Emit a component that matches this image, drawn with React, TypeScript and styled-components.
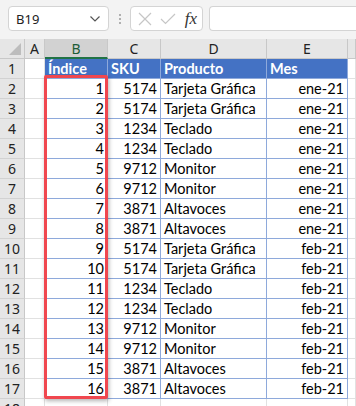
import { createGlobalStyle } from 'styled-components';
import styled from 'styled-components';

const GlobalStyle = createGlobalStyle`
  html, body {
    margin: 0;
    padding: 0;
    background: #ffffff;
  }
  body {
    font-family: Lato, 'Open Sans', sans-serif;
    width: 356px;
    height: 406px;
    overflow: hidden;
  }
`;

type Row = { idx: number; sku: number; product: string; month: string };

const rows: Row[] = [
  { idx: 1, sku: 5174, product: 'Tarjeta Gráfica', month: 'ene-21' },
  { idx: 2, sku: 5174, product: 'Tarjeta Gráfica', month: 'ene-21' },
  { idx: 3, sku: 1234, product: 'Teclado', month: 'ene-21' },
  { idx: 4, sku: 1234, product: 'Teclado', month: 'ene-21' },
  { idx: 5, sku: 9712, product: 'Monitor', month: 'ene-21' },
  { idx: 6, sku: 9712, product: 'Monitor', month: 'ene-21' },
  { idx: 7, sku: 3871, product: 'Altavoces', month: 'ene-21' },
  { idx: 8, sku: 3871, product: 'Altavoces', month: 'ene-21' },
  { idx: 9, sku: 5174, product: 'Tarjeta Gráfica', month: 'feb-21' },
  { idx: 10, sku: 5174, product: 'Tarjeta Gráfica', month: 'feb-21' },
  { idx: 11, sku: 1234, product: 'Teclado', month: 'feb-21' },
  { idx: 12, sku: 1234, product: 'Teclado', month: 'feb-21' },
  { idx: 13, sku: 9712, product: 'Monitor', month: 'feb-21' },
  { idx: 14, sku: 9712, product: 'Monitor', month: 'feb-21' },
  { idx: 15, sku: 3871, product: 'Altavoces', month: 'feb-21' },
  { idx: 16, sku: 3871, product: 'Altavoces', month: 'feb-21' },
];

const columns = ['A', 'B', 'C', 'D', 'E', ''];

const App = (): JSX.Element => {
  return (
    <>
      <GlobalStyle />
      <Window>
        <FormulaBar>
          <NameBox>
            <span>B19</span>
            <svg width="12" height="8" viewBox="0 0 12 8">
              <path d="M1.5 1.5 L6 6 L10.5 1.5" fill="none" stroke="#555" strokeWidth="1.2" />
            </svg>
          </NameBox>
          <Dots>
            <i />
            <i />
            <i />
          </Dots>
          <FxBox>
            <svg width="14" height="14" viewBox="0 0 14 14">
              <path d="M1 1 L13 13 M13 1 L1 13" stroke="#c6c6c6" strokeWidth="1.2" />
            </svg>
            <svg width="16" height="12" viewBox="0 0 16 12">
              <path d="M1 6 L5.5 10.5 L15 1" fill="none" stroke="#c6c6c6" strokeWidth="1.2" />
            </svg>
            <FxLabel>fx</FxLabel>
          </FxBox>
          <FormulaInput />
        </FormulaBar>

        <Sheet>
          <Grid>
            <Corner>
              <svg width="12" height="12" viewBox="0 0 12 12">
                <path d="M12 0 L12 12 L0 12 Z" fill="#bdbdbd" />
              </svg>
            </Corner>
            {columns.map((c) => (
              <ColHeader key={c || 'F'} $selected={c === 'B'}>
                {c}
              </ColHeader>
            ))}

            <RowHeader>1</RowHeader>
            <Cell />
            <TitleCell>Índice</TitleCell>
            <TitleCell>SKU</TitleCell>
            <TitleCell>Producto</TitleCell>
            <TitleCell>Mes</TitleCell>
            <Cell />

            {rows.map((r, i) => (
              <Line key={r.idx}>
                <RowHeader>{i + 2}</RowHeader>
                <Cell />
                <DataCell $align="right">{r.idx}</DataCell>
                <DataCell $align="right">{r.sku}</DataCell>
                <DataCell $align="left">{r.product}</DataCell>
                <DataCell $align="right">{r.month}</DataCell>
                <Cell />
              </Line>
            ))}

            <RowHeader>18</RowHeader>
            <Cell />
            <Cell />
            <Cell />
            <Cell />
            <Cell />
            <Cell />
          </Grid>
          <Highlight />
        </Sheet>
      </Window>
    </>
  );
};

const Window = styled.div`
  width: 356px;
  height: 406px;
  overflow: hidden;
  background: #ffffff;
`;

const FormulaBar = styled.div`
  height: 39px;
  box-sizing: border-box;
  padding: 6px 0 8px 8px;
  display: flex;
  align-items: stretch;
  background: #f3f3f3;
`;

const NameBox = styled.div`
  width: 101px;
  box-sizing: border-box;
  background: #ffffff;
  border: 1px solid #d4d4d4;
  border-radius: 4px;
  display: flex;
  align-items: center;
  justify-content: space-between;
  padding: 0 7px 0 7px;
  font-family: 'Noto Sans', 'Open Sans', sans-serif;
  font-size: 13px;
  color: #222;
`;

const Dots = styled.div`
  width: 21px;
  display: flex;
  flex-direction: column;
  align-items: center;
  justify-content: center;
  gap: 2px;
  i {
    width: 2px;
    height: 2px;
    background: #9a9a9a;
    border-radius: 1px;
  }
`;

const FxBox = styled.div`
  width: 73px;
  box-sizing: border-box;
  background: #ffffff;
  border: 1px solid #d4d4d4;
  border-radius: 4px;
  display: flex;
  align-items: center;
  padding: 0 5px 0 7px;
  gap: 8px;
`;

const FxLabel = styled.span`
  font-family: 'Liberation Serif', serif;
  font-style: italic;
  font-size: 17px;
  color: #333;
  margin-left: auto;
`;

const FormulaInput = styled.div`
  flex: 1;
  margin-left: 6px;
  background: #ffffff;
  border: 1px solid #d4d4d4;
  border-right: none;
  border-radius: 4px 0 0 4px;
`;

const Sheet = styled.div`
  position: relative;
`;

const Grid = styled.div`
  display: grid;
  grid-template-columns: 25px 20px 63px 53px 106px 81px 1fr;
  grid-auto-rows: 20px;
  font-family: Lato, 'Open Sans', sans-serif;
  font-size: 14.5px;
  color: #000;
`;

const Line = styled.div`
  display: contents;
`;

const Corner = styled.div`
  background: #e6e6e6;
  border-right: 1px solid #c8c8c8;
  border-bottom: 1px solid #c8c8c8;
  display: flex;
  align-items: flex-end;
  justify-content: flex-end;
  padding: 0 3px 3px 0;
  box-sizing: border-box;
`;

const ColHeader = styled.div<{ $selected?: boolean }>`
  box-sizing: border-box;
  background: ${(p) => (p.$selected ? '#d2d2d2' : '#e6e6e6')};
  border-right: 1px solid #c8c8c8;
  border-bottom: ${(p) => (p.$selected ? '2px solid #217346' : '1px solid #c8c8c8')};
  color: ${(p) => (p.$selected ? '#1d5c38' : '#222')};
  display: flex;
  align-items: center;
  justify-content: center;
  font-family: 'Noto Sans', 'Open Sans', sans-serif;
  font-size: 14px;
`;

const RowHeader = styled.div`
  box-sizing: border-box;
  background: #e6e6e6;
  border-right: 1px solid #c8c8c8;
  border-bottom: 1px solid #d2d2d2;
  display: flex;
  align-items: center;
  justify-content: center;
  font-family: 'Noto Sans', 'Open Sans', sans-serif;
  font-size: 14px;
  color: #222;
`;

const Cell = styled.div`
  box-sizing: border-box;
  border-right: 1px solid #e1e1e1;
  border-bottom: 1px solid #e1e1e1;
`;

const TitleCell = styled.div`
  box-sizing: border-box;
  background: #4472c4;
  border-right: 1px solid #8ea9db;
  border-bottom: 1px solid #8ea9db;
  color: #ffffff;
  font-weight: 700;
  display: flex;
  align-items: center;
  padding: 0 3px;
  white-space: nowrap;
`;

const DataCell = styled.div<{ $align: 'left' | 'right' }>`
  box-sizing: border-box;
  border-right: 1px solid #8ea9db;
  border-bottom: 1px solid #8ea9db;
  display: flex;
  align-items: center;
  justify-content: ${(p) => (p.$align === 'right' ? 'flex-end' : 'flex-start')};
  padding: 0 3px;
  white-space: nowrap;
`;

const Highlight = styled.div`
  position: absolute;
  left: 44px;
  top: 36px;
  width: 64px;
  height: 324px;
  box-sizing: border-box;
  border: 3px solid #f0474f;
  border-radius: 2px;
  box-shadow: 1px 2px 4px rgba(0, 0, 0, 0.3);
  pointer-events: none;
`;

export default App;
